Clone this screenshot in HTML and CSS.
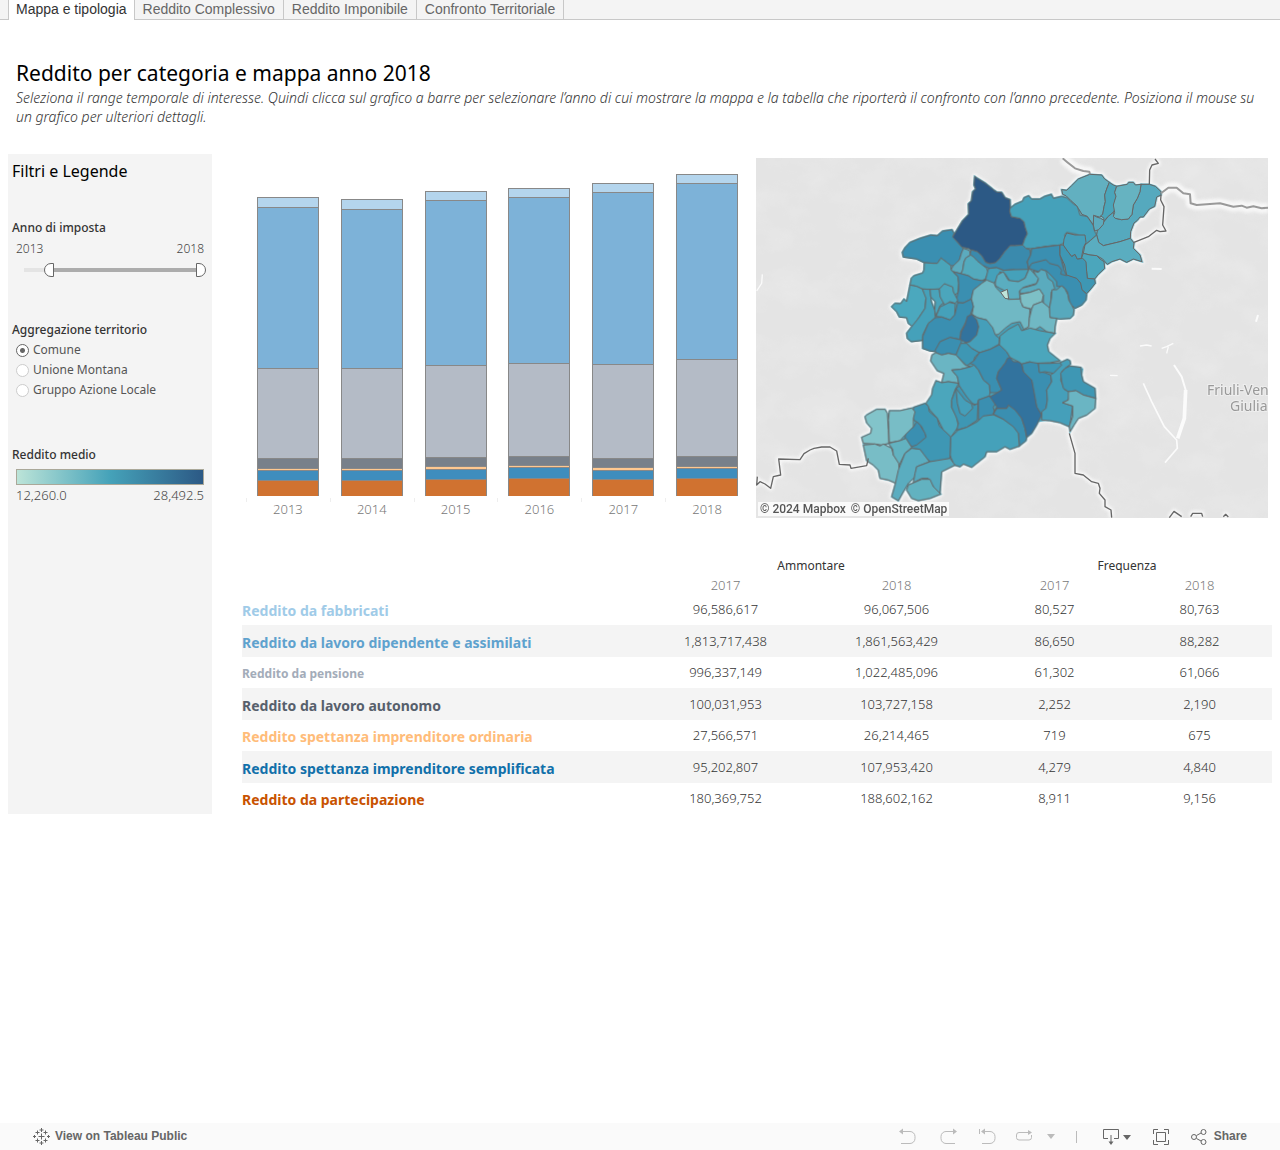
FILE: index.html
```html
<!DOCTYPE html>
<html lang="it">
<head>
<meta charset="utf-8">
<meta name="viewport" content="width=device-width, initial-scale=1">
<title>Reddito per categoria e mappa</title>
<link rel="stylesheet" href="styles.css">
</head>
<body>
<nav class="tabs">
  <a class="tab tab-active" href="#mappa">Mappa e tipologia</a>
  <a class="tab" href="#complessivo">Reddito Complessivo</a>
  <a class="tab" href="#imponibile">Reddito Imponibile</a>
  <a class="tab" href="#confronto">Confronto Territoriale</a>
</nav>

<header class="intro">
  <h1>Reddito per categoria e mappa anno 2018</h1>
  <p>Seleziona il range temporale di interesse. Quindi clicca sul grafico a barre per selezionare l’anno di cui mostrare la mappa e la tabella che riporterà il confronto con l’anno precedente. Posiziona il mouse su un grafico per ulteriori dettagli.</p>
</header>

<main class="dashboard">
  <aside class="sidebar">
    <h2>Filtri e Legende</h2>
    <section class="filter filter-year">
      <h3>Anno di imposta</h3>
      <div class="ends"><span>2013</span><span>2018</span></div>
      <div class="slider">
        <div class="track"></div>
        <div class="track-fill"></div>
        <input class="thumb-start" type="range" min="2012" max="2018" value="2013" aria-label="Anno iniziale">
        <input class="thumb-end" type="range" min="2012" max="2018" value="2018" aria-label="Anno finale">
      </div>
    </section>
    <fieldset class="filter filter-area">
      <legend>Aggregazione territorio</legend>
      <label><input type="radio" name="area" checked>Comune</label>
      <label><input type="radio" name="area">Unione Montana</label>
      <label><input type="radio" name="area">Gruppo Azione Locale</label>
    </fieldset>
    <section class="filter">
      <h3>Reddito medio</h3>
      <div class="ramp"></div>
      <div class="ends"><span>12,260.0</span><span>28,492.5</span></div>
    </section>
  </aside>

  <div class="content">
    <div class="charts">
      <div class="bars">
        <div class="col"><div class="bar"><i class="s1" style="height:10px"></i><i class="s2" style="height:161px"></i><i class="s3" style="height:90px"></i><i class="s4" style="height:10px"></i><i class="s5" style="height:2px"></i><i class="s6" style="height:10px"></i><i class="s7" style="height:16px"></i></div><span>2013</span></div>
        <div class="col"><div class="bar"><i class="s1" style="height:10px"></i><i class="s2" style="height:159px"></i><i class="s3" style="height:90px"></i><i class="s4" style="height:10px"></i><i class="s5" style="height:2px"></i><i class="s6" style="height:10px"></i><i class="s7" style="height:16px"></i></div><span>2014</span></div>
        <div class="col"><div class="bar"><i class="s1" style="height:9px"></i><i class="s2" style="height:165px"></i><i class="s3" style="height:92px"></i><i class="s4" style="height:9px"></i><i class="s5" style="height:3px"></i><i class="s6" style="height:10px"></i><i class="s7" style="height:17px"></i></div><span>2015</span></div>
        <div class="col"><div class="bar"><i class="s1" style="height:9px"></i><i class="s2" style="height:166px"></i><i class="s3" style="height:93px"></i><i class="s4" style="height:9px"></i><i class="s5" style="height:2px"></i><i class="s6" style="height:11px"></i><i class="s7" style="height:18px"></i></div><span>2016</span></div>
        <div class="col"><div class="bar"><i class="s1" style="height:9px"></i><i class="s2" style="height:172px"></i><i class="s3" style="height:94px"></i><i class="s4" style="height:9px"></i><i class="s5" style="height:3px"></i><i class="s6" style="height:9px"></i><i class="s7" style="height:17px"></i></div><span>2017</span></div>
        <div class="col"><div class="bar"><i class="s1" style="height:9px"></i><i class="s2" style="height:176px"></i><i class="s3" style="height:97px"></i><i class="s4" style="height:10px"></i><i class="s5" style="height:2px"></i><i class="s6" style="height:10px"></i><i class="s7" style="height:18px"></i></div><span>2018</span></div>
      </div>

      <div class="map">
        <svg viewBox="-402 9 1536 1080" preserveAspectRatio="xMidYMid slice" role="img" aria-label="Mappa del reddito medio per comune">
          <defs>
            <filter id="soft" x="-20%" y="-20%" width="140%" height="140%"><feGaussianBlur stdDeviation="5"/></filter>
            <filter id="relief" x="0" y="0" width="100%" height="100%">
              <feTurbulence type="fractalNoise" baseFrequency="0.008 0.011" numOctaves="4" seed="7"/>
              <feColorMatrix values="0 0 0 0 1  0 0 0 0 1  0 0 0 0 1  1.6 0 0 0 -0.68"/>
            </filter>
            <g id="comuni">
              <path fill="#2c5985" d="M254,64L262,70 285,84 303,98 310,104 320,111 335,112 345,128 360,134 361,160 359,168 364,185 390,190 402,200 405,215 412,236 404,252 398,270 374,272 360,272 344,290 328,312 316,323 300,326 287,322 275,302 262,290 243,286 238,281 215,276 188,246 200,226 217,198 236,178 235,146 244,138 248,110 257,102 252,90Z"/>
              <path fill="#3a8fb1" d="M188,246L215,276 220,282 214,295 208,315 190,332 183,332 170,322 153,309 142,325 130,325 103,323 80,312 40,306 37,292 45,278 60,262 90,250 122,240 142,242 158,228 186,224 192,235Z"/>
              <path fill="#5cabbe" d="M220,280L238,286 242,300 228,308 222,320 218,345 213,356 190,350 183,344 190,332 208,315 214,295Z"/>
              <path fill="#3a8aad" d="M243,284L262,290 275,302 287,322 300,326 316,323 328,312 344,290 360,272 374,272 398,270 408,280 420,284 422,300 412,320 416,345 390,348 370,344 340,346 320,338 298,340 275,330 262,318 250,305 240,300Z"/>
              <path fill="#53aabd" d="M222,320L228,308 242,300 250,305 262,318 290,340 294,352 286,372 275,377 250,372 235,362 213,356 218,345Z"/>
              <path fill="#4aa5ba" d="M103,323L130,325 142,325 153,309 170,322 183,332 183,344 190,352 204,365 206,385 204,412 195,420 180,398 163,386 148,402 120,403 97,402 80,394 60,390 64,370 72,362 98,354 102,345Z"/>
              <path fill="#3a8fb1" d="M190,350L213,356 235,362 250,372 275,377 288,374 272,388 250,405 244,432 220,444 203,443 200,430 206,405 206,385 204,365Z"/>
              <path fill="#45a1ba" d="M360,160L375,148 398,138 402,128 416,122 424,132 450,132 464,124 484,118 490,130 515,124 530,128 552,148 562,152 570,180 592,184 610,210 614,228 620,240 600,258 586,270 582,250 560,238 530,232 524,240 528,260 510,270 470,274 425,281 408,280 398,270 404,252 412,236 405,215 402,200 390,190 364,185 359,168Z"/>
              <path fill="#3a8fb1" d="M425,281L470,274 510,270 512,300 520,330 522,345 530,358 560,368 574,385 578,405 590,418 588,435 575,450 555,460 540,445 532,410 520,395 500,394 500,380 487,365 470,348 455,345 445,350 416,340 412,320 422,300Z"/>
              <path fill="#3a8fb1" d="M416,340L425,325 468,314 478,325 505,332 515,345 512,357 530,362 522,345 510,300 510,270 425,281 422,300 412,320Z"/>
              <path fill="#5aabbe" d="M430,348L445,352 453,343 468,348 474,370 488,380 494,400 484,410 482,440 478,460 460,446 460,420 448,402 420,412 390,416 390,400 410,396 438,388 445,374Z"/>
              <path fill="#57a9bd" d="M515,392L525,402 534,420 536,435 545,450 552,464 550,480 540,490 510,492 480,488 478,460 484,430 486,404 500,404Z"/>
              <path fill="#45a1ba" d="M294,345L298,340 320,338 340,346 370,344 416,343 405,370 385,380 360,378 345,356 330,350 316,380 310,385 286,376Z"/>
              <path fill="#5aadc0" d="M316,380L322,360 340,350 355,376 385,380 405,370 418,340 445,370 440,385 400,397 388,408 390,432 356,433 350,410 330,400 316,392Z"/>
              <path fill="#70b8c4" d="M250,405L275,385 290,375 312,384 318,398 332,412 356,433 392,432 398,455 420,462 418,490 416,520 405,530 390,500 365,505 345,520 325,538 312,540 290,520 290,495 262,488 246,478 250,455 244,432Z"/>
              <path fill="#7dc0c6" d="M390,418L420,412 448,402 460,420 456,440 430,450 425,462 400,456 392,440Z"/>
              <path fill="#70b8c4" d="M425,462L430,450 456,440 478,458 480,488 500,490 495,515 494,535 470,530 450,515 430,528 395,527 416,515 418,490Z"/>
              <path fill="#4ba8be" d="M60,390L80,394 97,402 108,425 105,460 85,490 68,515 55,505 50,488 28,486 20,470 5,455 15,445 32,446 42,432 50,440 55,415Z"/>
              <path fill="#45a1ba" d="M97,402L120,403 124,440 134,465 136,488 115,505 98,540 98,556 64,560 52,550 50,535 65,515 85,490 105,460 108,430Z"/>
              <path fill="#4aa3ba" d="M120,403L148,402 150,420 165,440 150,452 138,484 134,465 136,440 122,425Z"/>
              <path fill="#4ba6bc" d="M148,402L163,386 188,396 190,410 203,435 196,445 180,440 165,452 150,425Z"/>
              <path fill="#45a1ba" d="M138,484L150,456 178,442 196,446 194,480 180,495 155,486Z"/>
              <path fill="#3a8fb1" d="M136,488L155,486 180,495 194,480 203,443 220,444 244,432 250,455 240,482 228,500 212,530 210,553 180,548 150,560 140,590 120,588 98,580 98,545 115,505Z"/>
              <path fill="#32739e" d="M232,484L246,478 260,495 266,515 260,540 240,560 228,563 210,553 214,530 225,510Z"/>
              <path fill="#459fba" d="M246,478L262,488 290,495 308,518 316,540 328,550 328,567 300,583 268,593 245,580 228,563 240,560 260,540 266,515 260,495Z"/>
              <g transform="translate(510)">
                <path fill="#62b0c0" d="M5,104L20,106 35,92 55,72 75,64 90,58 125,60 134,72 148,82 140,102 134,120 136,140 132,155 128,183 118,186 101,181 100,210 82,184 66,178 55,160 50,152 32,136 18,122 8,118Z"/>
                <path fill="#4aa5ba" d="M148,82L160,90 170,94 164,112 168,124 162,150 166,160 160,172 145,184 130,200 132,190 122,182 128,178 132,155 136,140 134,120 140,102Z"/>
                <path fill="#55a9be" d="M243,88L268,88 286,94 303,110 303,120 290,126 284,154 268,162 250,186 240,186 232,196 222,204 212,230 211,250 180,260 130,272 116,262 110,240 112,228 128,205 145,184 160,172 166,190 185,194 205,192 216,178 220,150 232,130 240,110Z"/>
                <path fill="#66b3c1" d="M170,94L202,88 206,82 220,82 226,90 243,88 240,110 232,130 220,150 216,178 205,192 185,194 166,190 160,184 164,172 160,150 168,124 164,112Z"/>
                <path fill="#5cabbe" d="M101,181L110,186 122,190 132,196 130,208 116,224 104,228 100,210Z"/>
                <path fill="#5aadc0" d="M110,240L116,262 130,272 180,260 211,250 222,264 220,280 240,300 246,320 220,312 200,322 180,312 155,320 142,328 128,312 110,302 90,300 70,295 75,270 92,256Z"/>
                <path fill="#4ba6bc" d="M70,295L90,300 110,302 120,312 132,320 134,340 115,358 104,372 82,370 80,350 76,320 64,310Z"/>
                <path fill="#3e97b4" d="M0,270L10,270 24,290 35,304 45,298 52,312 68,310 78,320 80,350 82,370 104,372 106,385 90,405 80,416 66,404 62,384 50,370 20,360 14,330 0,300Z"/>
                <path fill="#459fba" d="M20,234L45,240 75,240 78,262 70,278 64,310 52,312 45,298 35,304 24,290 10,270 12,252Z"/>
              </g>
              <g transform="translate(-120 495)">
                <path fill="#3a8fb1" d="M255,92L270,65 300,52 335,60 332,75 318,105 295,100 275,105 258,98Z"/>
                <path fill="#3e97b4" d="M332,70L350,70 365,85 388,98 375,110 370,125 350,137 318,105Z"/>
                <path fill="#3a8fb1" d="M388,98L420,88 448,74 470,95 480,112 465,130 445,155 440,175 455,210 442,218 420,218 418,195 400,180 385,150 372,135 360,130 372,122Z"/>
                <path fill="#6ab5c3" d="M258,98L275,105 295,100 318,105 345,135 362,140 330,148 305,150 322,170 326,190 295,185 275,188 282,160 262,152 242,122 246,105Z"/>
                <path fill="#4ba6bc" d="M450,48L475,28 505,12 515,32 540,24 570,32 615,40 600,55 592,75 596,95 630,122 600,128 550,130 540,125 515,132 505,125 480,112 470,95 448,74Z"/>
                <path fill="#459fba" d="M305,150L330,148 362,140 372,135 385,150 400,180 418,195 420,218 418,228 385,240 382,255 365,250 345,225 328,198 325,185 322,170Z"/>
                <path fill="#4ba6bc" d="M258,182L275,188 295,185 326,190 315,210 305,240 305,262 320,290 325,320 302,352 280,330 262,295 240,270 228,250 245,225 248,205Z"/>
                <path fill="#3e97b4" d="M318,205L328,198 350,230 372,256 384,250 382,300 350,322 320,330 325,310 318,290 305,262 305,240Z"/>
                <path fill="#459fba" d="M318,205L345,240 365,252 368,265 345,288 330,280 322,250Z"/>
                <path fill="#3a8fb1" d="M385,240L418,228 440,245 430,262 435,280 445,282 410,288 385,300Z"/>
                <path fill="#3a8fb1" d="M430,282L440,265 470,265 478,252 500,272 515,295 525,325 530,352 528,362 508,378 505,340 485,320 460,298Z"/>
                <path fill="#45a1ba" d="M302,352L325,330 350,322 382,305 400,288 430,284 460,298 490,320 505,340 508,378 480,388 465,380 440,395 410,395 405,410 365,442 340,432 330,440 312,435 300,405Z"/>
                <path fill="#3e97b4" d="M190,262L225,250 235,258 238,275 262,295 268,318 302,350 300,415 270,425 240,425 220,405 210,388 180,385 185,380 225,350 228,350 215,320 200,305 190,300Z"/>
                <path fill="#3a8fb1" d="M200,305L210,315 225,340 228,352 200,375 185,380 165,355 168,330 190,322Z"/>
                <path fill="#78bdc6" d="M118,272L150,272 185,264 195,275 190,295 190,320 165,345 150,362 118,368 115,300Z"/>
                <path fill="#82c4ca" d="M50,285L80,268 105,268 112,280 115,330 116,370 95,375 75,372 40,370 35,352 62,340 65,325 50,308 45,290Z"/>
                <path fill="#78bdc6" d="M40,375L75,372 90,378 100,372 125,385 130,405 148,430 148,460 138,490 115,480 90,475 85,450 70,435 50,422Z"/>
                <path fill="#62b2c0" d="M116,370L150,362 168,355 185,382 165,400 150,430 155,450 148,452 146,430 130,405 128,388Z"/>
                <path fill="#5aadc0" d="M185,385L210,388 238,425 200,440 195,470 175,490 160,515 145,542 125,530 135,495 145,450 165,400Z"/>
                <path fill="#55a9be" d="M200,440L240,425 300,415 315,435 275,455 270,520 250,500 235,475 215,475 190,488 195,460Z"/>
                <path fill="#62b2c0" d="M175,495L215,478 240,478 250,500 272,522 240,535 205,542 185,535 170,510Z"/>
              </g>
              <g transform="translate(420 495)">
                <path fill="#3a8fb1" d="M-25,132L0,126 25,130 28,155 45,158 62,165 65,185 50,210 52,240 48,265 35,285 20,262 10,215 5,180 -20,155Z"/>
                <path fill="#32739e" d="M-75,130L-68,115 -60,112 -50,125 -35,125 -25,132 -20,155 5,180 12,215 20,260 35,285 20,315 5,340 -10,352 -15,325 -25,295 -45,270 -65,255 -70,265 -100,265 -110,280 -100,260 -120,230 -98,218 -85,210 -100,175 -95,155Z"/>
                <path fill="#459fba" d="M90,128L112,118 120,122 122,132 105,145 95,155 92,180 105,210 118,215 115,240 97,248 128,258 122,300 118,320 90,308 60,302 35,300 35,275 48,265 52,240 50,210 65,185 62,165 75,155Z"/>
                <path fill="#3e97b4" d="M25,130L60,130 90,128 95,135 70,160 45,155 28,158Z"/>
                <path fill="#3e97b4" d="M105,145L120,138 153,142 155,165 160,185 195,205 197,235 160,225 138,212 115,215 100,205 95,185 92,160Z"/>
                <path fill="#6ab5c3" d="M115,215L138,212 160,225 197,235 195,265 170,285 145,295 132,315 120,335 118,318 128,290 128,258 97,248 115,240Z"/>
              </g>
              <path fill="#bfe5da" d="M332,412L352,403 356,432 345,430Z"/>
            </g>
            <g id="borders">
              <path d="M-398,965L-400,990 -390,980 -375,987 -358,1000 -350,965 -328,960 -334,912 -270,914 -258,896 -240,885 -228,880 -205,876 -180,876 -160,888 -152,928 -120,930 -117,940 -70,932 -65,910"/>
              <path d="M795,12L805,25 786,30 779,45 778,88"/>
              <path d="M813,120L812,135 822,155 818,210 828,228 810,230 800,226 775,245 732,262"/>
              <path d="M538,835L555,895 555,955 580,960 605,980 625,985 630,1000 628,1015 645,1035 645,1055 663,1065 665,1088"/>
              <path d="M838,1088L852,1069 875,1085 M902,1085L908,1075 935,1075 938,1085 M1000,1085L1007,1078 1015,1086"/>
            </g>
            <path id="state" d="M518,10L530,20 555,40 580,48 598,50 600,58 M813,115L835,98 860,98 880,115 900,118 902,145 920,150 990,145 1030,155 1055,152 1070,158 1090,154 1115,160 1134,158"/>
          </defs>
          <rect x="-402" y="9" width="1536" height="1080" fill="#e4e4e4"/>
          <rect x="-402" y="9" width="1536" height="1080" filter="url(#relief)" opacity=".22"/>
          <g fill="none" stroke="#fbfbfb">
            <path stroke-width="6" d="M852,630L875,665 887,705 885,745"/>
            <path stroke-width="11" d="M887,705L883,790 863,850"/>
            <path stroke-width="5" d="M760,685L785,740 823,815 860,855 862,880 825,923"/>
            <path stroke-width="4" d="M750,573L770,570 785,573 M815,580L830,575 850,565 M830,595L835,575 M660,661L683,662 M-400,408L-385,385 -383,358"/>
            <path stroke-width="6" d="M785,341L815,342 M1098,500L1104,480"/>
          </g>
          <use class="halo" href="#comuni"/>
          <use class="halo" href="#borders"/>
          <use class="halo halo-wide" href="#state"/>
          <use class="seams" href="#comuni"/>
          <path fill="#45a1ba" d="M200,320L600,260 590,380 480,480 460,620 580,640 560,780 400,810 200,900 100,980 60,880 -50,860 150,740 180,650 120,500Z"/>
          <use class="outline" href="#comuni"/>
          <use class="border" href="#borders"/>
          <use class="state" href="#state"/>
          <g class="region-name"><text x="951" y="719">Friuli-Ven</text><text x="1020" y="769">Giulia</text></g>
        </svg>
        <div class="credits"><a href="#mapbox">© 2024 Mapbox</a><a href="#osm">© OpenStreetMap</a></div>
      </div>
    </div>

    <table class="income">
      <colgroup><col class="c-name"><col class="c-amount"><col class="c-amount"><col class="c-freq"><col class="c-freq"></colgroup>
      <thead>
        <tr class="groups"><td></td><th colspan="2">Ammontare</th><th colspan="2">Frequenza</th></tr>
        <tr class="years"><td></td><th>2017</th><th>2018</th><th>2017</th><th>2018</th></tr>
      </thead>
      <tbody>
        <tr><th class="n1">Reddito da fabbricati</th><td>96,586,617</td><td>96,067,506</td><td>80,527</td><td>80,763</td></tr>
        <tr><th class="n2">Reddito da lavoro dipendente e assimilati</th><td>1,813,717,438</td><td>1,861,563,429</td><td>86,650</td><td>88,282</td></tr>
        <tr><th class="n3">Reddito da pensione</th><td>996,337,149</td><td>1,022,485,096</td><td>61,302</td><td>61,066</td></tr>
        <tr><th class="n4">Reddito da lavoro autonomo</th><td>100,031,953</td><td>103,727,158</td><td>2,252</td><td>2,190</td></tr>
        <tr><th class="n5">Reddito spettanza imprenditore ordinaria</th><td>27,566,571</td><td>26,214,465</td><td>719</td><td>675</td></tr>
        <tr><th class="n6">Reddito spettanza imprenditore semplificata</th><td>95,202,807</td><td>107,953,420</td><td>4,279</td><td>4,840</td></tr>
        <tr><th class="n7">Reddito da partecipazione</th><td>180,369,752</td><td>188,602,162</td><td>8,911</td><td>9,156</td></tr>
      </tbody>
    </table>
  </div>
</main>

<footer class="toolbar">
  <a class="brand" href="#public">
    <svg width="17" height="17" viewBox="0 0 17 17"><path d="M8.500 5.500v6M5.500 8.500h6M8.500 0v4M6.500 2h4M8.500 13v4M6.500 15h4M0 8.500h3M1.500 7v3M14 8.500h3M15.500 7v3M4.500 2.500v4M2.500 4.500h4M12.500 2.500v4M10.500 4.500h4M4.500 10.500v4M2.500 12.500h4M12.500 10.500v4M10.500 12.500h4"/></svg>
    View on Tableau Public
  </a>
  <div class="tools">
    <button class="off t-undo" aria-label="Undo"><svg width="18" height="18" viewBox="0 0 18 18"><path d="M2 3.500h9a5 5 0 0 1 5 5v2a5 5 0 0 1-5 5H2"/><path class="solid" d="M0 3.500L4 .5v6z"/></svg></button>
    <button class="off t-redo" aria-label="Redo"><svg width="18" height="18" viewBox="0 0 18 18"><path d="M16 3.500H7a5 5 0 0 0-5 5v2a5 5 0 0 0 5 5h9"/><path class="solid" d="M18 3.500L14 .5v6z"/></svg></button>
    <button class="off t-reset" aria-label="Revert"><svg width="18" height="18" viewBox="0 0 18 18"><path d="M3 3.500h8a5 5 0 0 1 5 5v2a5 5 0 0 1-5 5H3M.5 1v5"/><path class="solid" d="M2 3.500L6 .5v6z"/></svg></button>
    <button class="off t-refresh" aria-label="Refresh"><svg width="18" height="18" viewBox="0 0 18 18"><path d="M13 4.500H4a2.500 2.500 0 0 0-2.500 2.500v2.500A2.500 2.500 0 0 0 4 12h10a2.500 2.500 0 0 0 2.500-2.500V7"/><path class="solid" d="M17 4.500L13 2v5z"/></svg></button>
    <button class="off t-more" aria-label="Pause"><svg width="8" height="5" viewBox="0 0 8 5"><path class="solid" d="M0 0h8L4 5z"/></svg></button>
    <span class="divider"></span>
    <button class="t-download" aria-label="Download"><svg width="28" height="18" viewBox="0 0 28 18"><path d="M5 10.500H.5v-9h15v9H11M8 7v8"/><path class="solid" d="M5.500 13.500h5L8 17zM20 7h8l-4 5z"/></svg></button>
    <button class="t-full" aria-label="Full screen"><svg width="16" height="16" viewBox="0 0 16 16"><path d="M3.500 3.500h9v9h-9zM.5 5V.5H5M11 .5h4.500V5M15.500 11v4.500H11M5 15.500H.5V11"/></svg></button>
    <button class="t-share"><svg width="16" height="16" viewBox="0 0 16 16"><path d="M5.500 6.500l4.500-2.500M5.500 9.500l4.500 2.500"/><circle cx="3" cy="8" r="2.500"/><circle cx="12.500" cy="3" r="2.500"/><circle cx="12.500" cy="13" r="2.500"/></svg>Share</button>
  </div>
</footer>
</body>
</html>
```

FILE: styles.css
```css
* { box-sizing: border-box; }

body {
  margin: 0;
  min-height: 100vh;
  display: flex;
  flex-direction: column;
  background: #fff;
  color: #555;
  font: 12px/20px "Noto Sans", "Open Sans", sans-serif;
}

h1, h2, h3, p { margin: 0; }
a { color: inherit; text-decoration: none; }

/* sheet tabs */
.tabs {
  display: flex;
  height: 20px;
  padding-left: 8px;
  background: #f4f4f4;
  border-bottom: 1px solid #c8c8c8;
  font: 14px/19px "Liberation Sans", Arial, sans-serif;
}
.tab {
  height: 19px;
  padding: 0 8px;
  border-right: 1px solid #c8c8c8;
  color: #666;
}
.tab-active {
  height: 20px;
  padding: 0 7px;
  border-left: 1px solid #c8c8c8;
  background: #fff;
  color: #333;
}

.intro { padding: 39px 12px 0 16px; }
.intro h1 {
  color: #000;
  font-size: 21px;
  line-height: 28px;
  font-weight: 400;
}
.intro p {
  padding-top: 1px;
  font-size: 14px;
  line-height: 19px;
  font-style: italic;
  font-weight: 300;
  color: #333;
}

.dashboard {
  display: flex;
  gap: 30px;
  padding: 28px 8px 0;
}

/* filters */
.sidebar {
  flex: none;
  width: 204px;
  height: 660px;
  padding: 7px 8px 0 4px;
  background: #f4f4f4;
}
.sidebar h2 {
  color: #000;
  font-size: 16px;
  line-height: 20px;
  font-weight: 400;
}
.sidebar h3, .sidebar legend {
  padding: 0;
  color: #333;
  font-size: 12px;
  line-height: 20px;
  font-weight: 500;
}
.filter { margin: 0; padding: 0; border: 0; }
.filter-year { margin-top: 37px; height: 102px; }
.filter-area { height: 125px; }
.ends {
  display: flex;
  justify-content: space-between;
  padding-left: 4px;
  color: #444;
  font-size: 13px;
  font-weight: 300;
}
.filter-year .ends { padding-top: 1px; font-size: 12px; }
.slider {
  position: relative;
  height: 20px;
  margin: 1px -2px 0 2px;
}
.track, .track-fill {
  position: absolute;
  top: 8px;
  left: 10px;
  right: 6px;
  height: 4px;
  background: #e4e4e4;
}
.track-fill { left: 36px; background: #acacac; }
.slider input {
  position: absolute;
  inset: 0;
  width: 100%;
  height: 20px;
  margin: 0;
  appearance: none;
  background: none;
  pointer-events: none;
}
.slider input::-webkit-slider-thumb {
  appearance: none;
  width: 10px;
  height: 14px;
  border: 1px solid #666;
  border-radius: 7px 0 0 7px;
  background: #fff;
  pointer-events: auto;
}
.slider .thumb-end::-webkit-slider-thumb { border-radius: 0 7px 7px 0; }
.filter-area label {
  display: flex;
  align-items: center;
  gap: 4px;
  height: 20px;
  padding-left: 4px;
}
.filter-area input {
  appearance: none;
  width: 13px;
  height: 13px;
  margin: 0;
  border: 1px solid #ccc;
  border-radius: 50%;
  background: #fff;
}
.filter-area input:checked {
  border-color: #666;
  background: radial-gradient(circle, #666 2px, #fff 3px);
}
.ramp {
  height: 16px;
  margin: 4px 0 0 4px;
  border: 1px solid #aaa899;
  background: linear-gradient(90deg, #bce4d8, #45a2b9 50%, #2c5985);
}

.content { flex: 1; min-width: 0; }

/* stacked bars */
.charts { display: flex; gap: 7px; padding: 4px 4px 0 0; }
.bars { flex: 1; display: flex; padding-left: 4px; }
.col {
  flex: 1;
  height: 360px;
  display: flex;
  flex-direction: column;
  justify-content: flex-end;
  align-items: center;
  background: linear-gradient(#eee, #eee) 0 340px / 1px 4px no-repeat;
  color: #777;
}
.col span {
  margin: 3px 0 -1px;
  font-size: 13px;
  font-weight: 300;
}
.bar {
  width: 62px;
  border: solid #888;
  border-width: 0 1px;
}
.bar i { display: block; border-top: 1px solid #888; }
.s1 { background: #b4d5ed; }
.s2 { background: #7db2d8; }
.s3 { background: #b4bbc6; }
.s4 { background: #78808a; }
.s5 { background: #ffc890; }
.s6 { background: #3f8dbd; }
.s7 { background: #d07230; }

/* map */
.map {
  position: relative;
  flex: none;
  width: 50%;
  max-width: 512px;
  height: 360px;
}
.map svg { display: block; width: 100%; height: 100%; }
.halo {
  fill: none;
  stroke: #f7f7f7;
  stroke-width: 16px;
  stroke-linejoin: round;
  filter: url(#soft);
}
.halo-wide { stroke-width: 30px; }
.seams { stroke: #55a8bc; stroke-width: 5px; }
.outline { stroke: #666; stroke-width: 3px; stroke-linejoin: round; }
.border, .state { fill: none; stroke: #666; stroke-width: 4px; stroke-linejoin: round; }
.state { stroke: #999; stroke-width: 6px; }
.region-name text {
  font: 42px "Noto Sans", sans-serif;
  fill: #999;
  stroke: #eee;
  stroke-width: 6px;
  paint-order: stroke;
}
.credits {
  position: absolute;
  left: 2px;
  bottom: 2px;
  display: flex;
  gap: 5px;
  height: 14px;
  padding: 0 2px;
  background: rgba(255, 255, 255, .8);
  font: 500 12px/14px Roboto, sans-serif;
}

/* income table */
.income {
  width: 100%;
  margin-top: 38px;
  border-collapse: collapse;
  table-layout: fixed;
  color: #333;
  font-size: 13px;
  font-weight: 300;
  text-align: center;
}
.income td, .income th { padding: 0; }
.c-name { width: 398px; }
.c-amount { width: 171px; }
.groups { height: 20px; }
.groups th { color: #333; font-size: 12px; font-weight: 400; }
.years { height: 18px; }
.years th { color: #777; font-weight: 300; line-height: 18px; }
.income tbody tr { height: 31px; }
.income tbody tr:nth-child(even) { height: 32px; background: #f4f4f4; }
.income tbody td { padding-bottom: 1px; }
.income tbody th {
  padding-top: 3px;
  text-align: left;
  font-size: 14px;
  font-weight: 700;
}
.income .n1 { color: #a0cbe8; }
.income .n2 { color: #5fa2ce; }
.income .n3 { color: #a3acb9; font-size: 12px; }
.income .n4 { color: #57606c; }
.income .n5 { color: #ffbc79; }
.income .n6 { color: #1170aa; }
.income .n7 { color: #c85200; }

/* bottom toolbar */
.toolbar {
  display: flex;
  justify-content: space-between;
  height: 27px;
  margin-top: auto;
  padding: 0 33px;
  background: #fafafa;
  color: #666;
  font: 700 12px/27px "Liberation Sans", Arial, sans-serif;
}
.toolbar svg { fill: none; stroke: #666; stroke-width: 1px; }
.toolbar .solid { fill: #666; stroke: none; }
.brand { display: flex; align-items: center; gap: 5px; }
.tools { display: flex; align-items: center; }
.tools button {
  display: flex;
  align-items: center;
  gap: 7px;
  margin: 0 0 0 22px;
  padding: 0;
  border: 0;
  background: none;
  color: inherit;
  font: inherit;
}
.tools .off svg { stroke: #bbb; }
.tools .off .solid { fill: #bbb; }
.tools .t-refresh { margin-left: 18px; }
.tools .t-more { margin-left: 14px; }
.divider { width: 1px; height: 12px; margin-left: 21px; background: #bbb; }
.tools .t-download { margin-left: 26px; }
```
